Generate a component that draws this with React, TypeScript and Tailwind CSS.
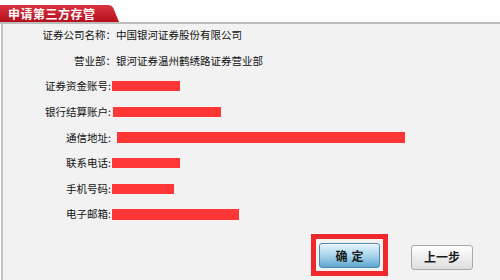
import React from "react";

const rows = [
  { label: "证券公司名称：", labelCls: "w-[113px]", value: "中国银河证券股份有限公司" },
  { label: "营业部：", labelCls: "w-[113px]", value: "银河证券温州鹤绣路证券营业部" },
  { label: "证券资金账号:", labelCls: "w-[108px]", bar: "ml-[1px] w-[68px] h-[10px]" },
  { label: "银行结算账户:", labelCls: "w-[108px]", bar: "ml-[2px] w-[108px] h-[10px]" },
  { label: "通信地址:", labelCls: "w-[108px]", bar: "ml-[6px] w-[288px] h-[11px]" },
  { label: "联系电话:", labelCls: "w-[108px]", bar: "ml-[1px] w-[68px] h-[10px]" },
  { label: "手机号码:", labelCls: "w-[108px]", bar: "ml-[1px] w-[62px] h-[10px]" },
  { label: "电子邮箱:", labelCls: "w-[108px]", bar: "ml-[1px] w-[127px] h-[11px]" },
];

export default function App() {
  return (
    <div
      className="w-[500px] h-[280px] bg-white flex flex-col overflow-hidden text-[#111]"
      style={{ fontFamily: '"Noto Sans CJK SC", "Noto Sans", sans-serif' }}
    >
      {/* tab header */}
      <div className="h-[22px] shrink-0 flex items-end">
        <div className="relative w-[120px] h-[17px] flex items-center">
          <svg className="absolute inset-0" width="120" height="17" viewBox="0 0 120 17">
            <defs>
              <linearGradient id="tabg" x1="0" y1="0" x2="0" y2="1">
                <stop offset="0" stopColor="#d93340" />
                <stop offset="1" stopColor="#b50f1d" />
              </linearGradient>
            </defs>
            <path d="M0 0 H108 Q112 0 113.5 3.5 L119 17 H0 Z" fill="url(#tabg)" />
          </svg>
          <span className="relative pl-[8px] text-[12px] font-bold text-white leading-none tracking-[0.5px]">
            申请第三方存管
          </span>
        </div>
        <div className="flex-1" />
      </div>
      <div className="h-[2px] shrink-0 bg-[#bcbcbc]" />

      {/* body */}
      <div className="flex-1 min-h-0 ml-px border-l-2 border-[#c4c4c4] bg-[#f2f2f2] flex flex-col">
        <div className="flex flex-col gap-[3.6px]">
          {rows.map((r, i) => (
            <div key={i} className="h-[22px] flex items-center text-[10.5px]">
              <span className={`${r.labelCls} text-right shrink-0 whitespace-nowrap`}>{r.label}</span>
              {r.value && <span className="whitespace-nowrap">{r.value}</span>}
              {r.bar && <span className={`${r.bar} bg-[#ff3636]`} />}
            </div>
          ))}
        </div>

        <div className="mt-[8.6px] flex items-start pl-[308px]">
          <div className="border-[5px] border-[#f0282c] p-[3px]">
            <button className="w-[61px] h-[25px] rounded-[3px] border border-[#4d87ad] bg-gradient-to-b from-[#e4f4fb] via-[#a9d5ec] to-[#5ea6d0] text-[12px] font-bold text-[#1a1a1a] tracking-[4px] pl-[4px] shadow-[inset_0_1px_0_#fff]">
              确定
            </button>
          </div>
          <button className="ml-[23px] mt-[11px] w-[62px] h-[25px] rounded-[3px] border border-[#a8a8a8] bg-gradient-to-b from-[#ffffff] to-[#dedede] text-[12px] font-bold text-[#1a1a1a]">
            上一步
          </button>
        </div>
      </div>
    </div>
  );
}
